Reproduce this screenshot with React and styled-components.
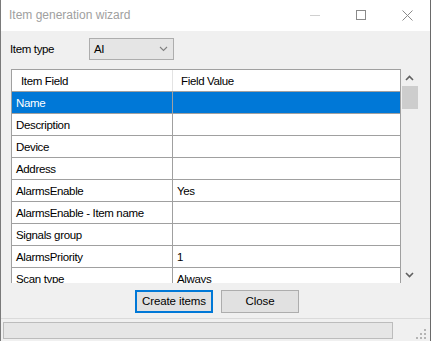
import React from 'react';
import styled, { createGlobalStyle } from 'styled-components';

const GlobalStyle = createGlobalStyle`
    html, body {
        margin: 0;
        padding: 0;
        background: #f0f0f0;
    }
    * {
        box-sizing: border-box;
    }
`;

const rows = [
    { field: 'Name', value: '' },
    { field: 'Description', value: '' },
    { field: 'Device', value: '' },
    { field: 'Address', value: '' },
    { field: 'AlarmsEnable', value: 'Yes' },
    { field: 'AlarmsEnable - Item name', value: '' },
    { field: 'Signals group', value: '' },
    { field: 'AlarmsPriority', value: '1' },
    { field: 'Scan type', value: 'Always' },
];

const Chevron = ({ up, color = '#606060', width = 1.6 }) => (
    <svg width="9" height="6" viewBox="0 0 9 6">
        <path
            d={up ? 'M1 5 L4.5 1.5 L8 5' : 'M1 1 L4.5 4.5 L8 1'}
            fill="none"
            stroke={color}
            strokeWidth={width}
        />
    </svg>
);

const App = () => {
    const [selected, setSelected] = React.useState(0);

    return (
        <>
            <GlobalStyle />
            <Window>
                <TitleBar>
                    <Title>Item generation wizard</Title>
                    <Caption>
                        <CaptionButton>
                            <svg width="10" height="10" viewBox="0 0 10 10">
                                <path d="M0 5.5 H10" stroke="#d0d0d0" strokeWidth="1" />
                            </svg>
                        </CaptionButton>
                        <CaptionButton>
                            <svg width="10" height="10" viewBox="0 0 10 10">
                                <rect x="0.5" y="0.5" width="9" height="9" fill="none" stroke="#8a8a8a" />
                            </svg>
                        </CaptionButton>
                        <CaptionButton>
                            <svg width="11" height="11" viewBox="0 0 11 11">
                                <path d="M0.5 0.5 L10.5 10.5 M10.5 0.5 L0.5 10.5" stroke="#8a8a8a" strokeWidth="1" />
                            </svg>
                        </CaptionButton>
                    </Caption>
                </TitleBar>

                <Body>
                    <TypeRow>
                        <Label>Item type</Label>
                        <Combo>
                            <span>AI</span>
                            <Chevron color="#808080" width={1.1} />
                        </Combo>
                    </TypeRow>

                    <GridFrame>
                        <Grid>
                            <Row>
                                <HeaderCell>Item Field</HeaderCell>
                                <HeaderCell $last>Field Value</HeaderCell>
                            </Row>
                            {rows.map((row, index) => {
                                const isSelected = selected === index;
                                return (
                                    <Row key={row.field} onClick={() => setSelected(index)}>
                                        <Cell $selected={isSelected}>{row.field}</Cell>
                                        <Cell $selected={isSelected} $last>{row.value}</Cell>
                                    </Row>
                                );
                            })}
                        </Grid>
                        <ScrollBar>
                            <ScrollArrow><Chevron up /></ScrollArrow>
                            <ScrollTrack>
                                <Thumb />
                            </ScrollTrack>
                            <ScrollArrow><Chevron /></ScrollArrow>
                        </ScrollBar>
                    </GridFrame>

                    <Buttons>
                        <Button $default>Create items</Button>
                        <Button>Close</Button>
                    </Buttons>
                </Body>

                <StatusBar>
                    <Progress />
                    <Grip>
                        <svg width="12" height="12" viewBox="0 0 12 12">
                            {[[9, 1], [5, 5], [9, 5], [1, 9], [5, 9], [9, 9]].map(([x, y]) => (
                                <rect key={`${x}-${y}`} x={x} y={y} width="2" height="2" fill="#b4b4b4" />
                            ))}
                        </svg>
                    </Grip>
                </StatusBar>
            </Window>
        </>
    );
};

const Window = styled.div`
    width: 431px;
    height: 341px;
    display: flex;
    flex-direction: column;
    background: #f0f0f0;
    border-left: 1px solid #7a7a7a;
    border-right: 1px solid #6a6a6a;
    font-family: "Liberation Sans", Arial, sans-serif;
    font-size: 11.5px;
    letter-spacing: -0.35px;
    color: #000;
    overflow: hidden;
`;

const TitleBar = styled.div`
    height: 31px;
    flex: none;
    display: flex;
    align-items: center;
    background: #fff;
`;

const Title = styled.div`
    flex: 1;
    padding-left: 8px;
    padding-bottom: 2px;
    font-size: 12px;
    letter-spacing: 0;
    color: #a0a0a0;
`;

const Caption = styled.div`
    display: flex;
    align-self: flex-start;
`;

const CaptionButton = styled.div`
    width: 46px;
    height: 30px;
    display: flex;
    align-items: center;
    justify-content: center;
`;

const Body = styled.div`
    flex: 1;
    display: flex;
    flex-direction: column;
    padding: 7px 12px 0 9px;
`;

const TypeRow = styled.div`
    display: flex;
    align-items: center;
    height: 22px;
`;

const Label = styled.div`
    width: 79px;
    padding-bottom: 1px;
`;

const Combo = styled.div`
    width: 85px;
    height: 22px;
    display: flex;
    align-items: center;
    justify-content: space-between;
    padding: 0 5px 0 4px;
    background: #e5e5e5;
    border: 1px solid #adadad;
`;

const GridFrame = styled.div`
    margin-top: 9px;
    margin-left: 1px;
    height: 214px;
    display: flex;
`;

const Grid = styled.div`
    width: 391px;
    overflow: hidden;
    background: #fff;
    border: 1px solid #a0a0a0;
    border-bottom: none;
`;

const Row = styled.div`
    display: grid;
    grid-template-columns: 160px 1fr;
    height: 22px;
    border-bottom: 1px solid #a0a0a0;
`;

const HeaderCell = styled.div`
    display: flex;
    align-items: center;
    padding-left: ${(props) => (props.$last ? '8px' : '9px')};
    border-left: ${(props) => (props.$last ? '1px solid #e3e3e3' : 'none')};
`;

const Cell = styled.div`
    display: flex;
    align-items: center;
    padding-left: 4px;
    background: ${(props) => (props.$selected ? '#0078d7' : '#fff')};
    color: ${(props) => (props.$selected ? '#fff' : '#000')};
    border-left: ${(props) => (props.$last ? '1px solid #a0a0a0' : 'none')};
    white-space: nowrap;
`;

const ScrollBar = styled.div`
    width: 17px;
    display: flex;
    flex-direction: column;
    background: #f0f0f0;
`;

const ScrollArrow = styled.div`
    height: 17px;
    display: flex;
    align-items: center;
    justify-content: center;
`;

const ScrollTrack = styled.div`
    flex: 1;
    padding: 0 0 0 1px;
`;

const Thumb = styled.div`
    height: 23px;
    background: #cdcdcd;
`;

const Buttons = styled.div`
    display: flex;
    justify-content: center;
    gap: 8px;
    margin-top: 7px;
    padding-left: 6px;
`;

const Button = styled.button`
    width: 78px;
    height: 23px;
    padding: 0 0 1px;
    font-family: inherit;
    font-size: 11.5px;
    letter-spacing: -0.1px;
    color: #000;
    background: #e1e1e1;
    border: ${(props) => (props.$default ? '2px solid #0078d7' : '1px solid #adadad')};
`;

const StatusBar = styled.div`
    height: 23px;
    flex: none;
    margin-top: 5px;
    display: flex;
    align-items: flex-start;
    padding: 3px 2px 0 2px;
    border-top: 1px solid #dadada;
`;

const Progress = styled.div`
    width: 390px;
    height: 17px;
    background: #e6e6e6;
    border: 1px solid #bcbcbc;
`;

const Grip = styled.div`
    margin-left: auto;
    margin-top: 6px;
    margin-right: 1px;
    display: flex;
`;

export default App;
